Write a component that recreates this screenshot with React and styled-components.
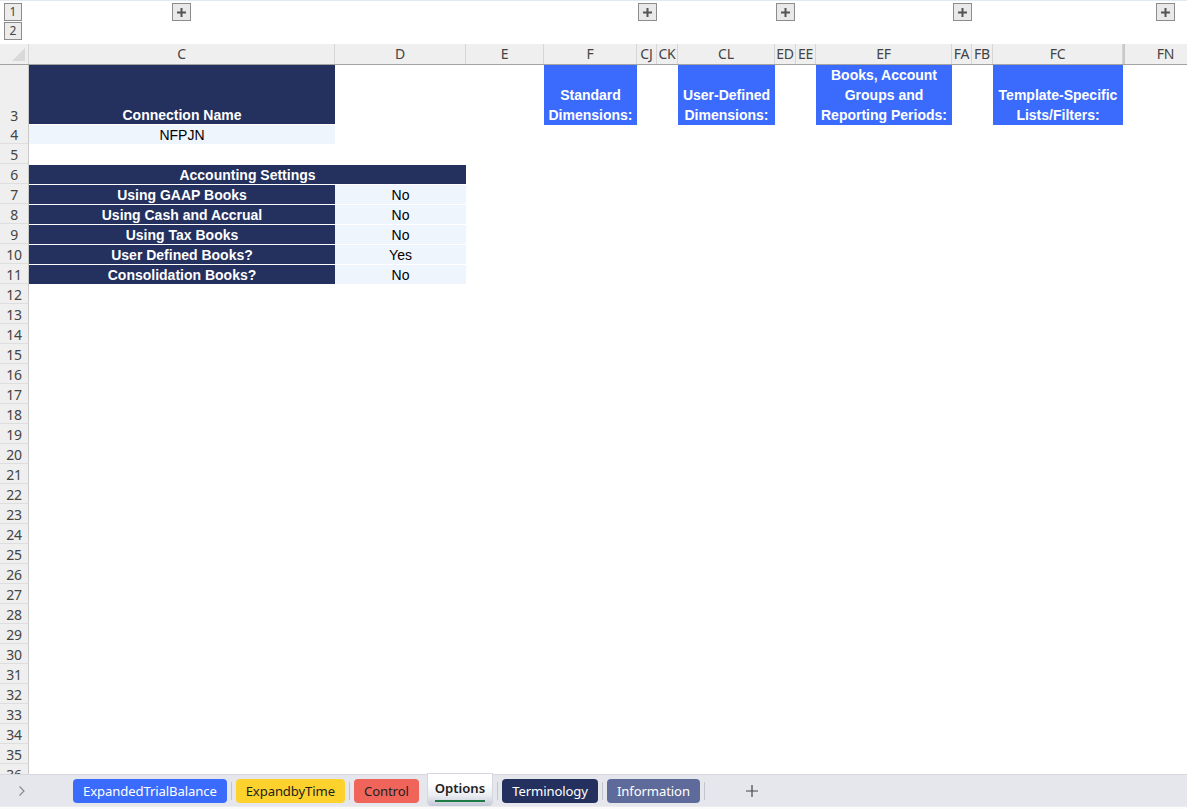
import React from 'react';
import styled, { createGlobalStyle } from 'styled-components';

const COLS =
  '29px 306px 131px 78px 93px 20px 21px 97px 21px 20px 136px 20px 21px 130px 2px 82px';

const NAVY = '#24305e';
const BLUE = '#3b6bfd';
const PALE = '#eef5fd';
const UI_FONT = '"Noto Sans", "Open Sans", sans-serif';
const CELL_FONT = '"Liberation Sans", Arial, sans-serif';

const Global = createGlobalStyle`
  html, body { margin: 0; padding: 0; background: #fff; }
  body { font-family: ${UI_FONT}; overflow: hidden; }
  * { box-sizing: border-box; }
`;

const Page = styled.div`
  width: 1187px;
  height: 809px;
  display: flex;
  flex-direction: column;
  overflow: hidden;
  background: #fff;
`;

/* ---------- outline bar ---------- */
const OutlineBar = styled.div`
  height: 44px;
  flex: none;
  border-top: 1px solid #e3e9f0;
  display: flex;
  align-items: flex-start;
  padding: 2px 0 0 4px;
`;

const LevelStack = styled.div`
  display: flex;
  flex-direction: column;
  gap: 1px;
`;

const LevelButton = styled.div`
  width: 18px;
  height: 18px;
  border: 1px solid #8c8c8c;
  background: #ececec;
  color: #444;
  font-size: 12px;
  line-height: 16px;
  text-align: center;
`;

const PlusButton = styled.div`
  width: 19px;
  height: 18px;
  margin-left: ${(p) => p.$gap}px;
  border: 1px solid #8c8c8c;
  background: #e9e9e9;
  display: flex;
  align-items: center;
  justify-content: center;
`;

const PlusGlyph = () => (
  <svg width="9" height="9" viewBox="0 0 9 9">
    <rect x="3.5" y="0" width="2" height="9" fill="#555" />
    <rect x="0" y="3.5" width="9" height="2" fill="#555" />
  </svg>
);

/* ---------- column headers ---------- */
const HeaderRow = styled.div`
  display: grid;
  grid-template-columns: ${COLS};
  height: 21px;
  flex: none;
  background: #efefef;
  border-bottom: 1px solid #a3a3a3;
`;

const Corner = styled.div`
  position: relative;
  border-right: 1px solid #d6d6d6;
  &::after {
    content: '';
    position: absolute;
    right: 3px;
    bottom: 3px;
    width: 0;
    height: 0;
    border-left: 13px solid transparent;
    border-bottom: 13px solid #d9d9d9;
  }
`;

const ColHead = styled.div`
  grid-column: ${(p) => p.$col};
  border-right: 1px solid ${(p) => (p.$hidden ? '#c8c8c8' : '#d6d6d6')};
  ${(p) => (p.$hidden ? 'border-left: 1px solid #c8c8c8;' : '')}
  color: #444;
  font-size: 14px;
  line-height: 20px;
  text-align: center;
  white-space: nowrap;
  overflow: hidden;
  letter-spacing: -0.2px;
`;

/* ---------- sheet ---------- */
const Sheet = styled.div`
  flex: 1;
  overflow: hidden;
  display: flex;
  flex-direction: column;
`;

const Row = styled.div`
  display: grid;
  grid-template-columns: ${COLS};
  height: ${(p) => p.$h}px;
  flex: none;
`;

const RowHead = styled.div`
  grid-column: 1;
  background: #efefef;
  border-right: 1px solid #c9c9c9;
  border-bottom: 1px solid #dedede;
  color: #444;
  font-size: 14px;
  line-height: 17px;
  display: flex;
  align-items: flex-end;
  justify-content: center;
  letter-spacing: -0.3px;
`;

const Cell = styled.div`
  grid-column: ${(p) => p.$col};
  background: ${(p) => p.$bg || 'transparent'};
  color: ${(p) => p.$fg || '#000'};
  font-family: ${CELL_FONT};
  font-size: 14px;
  font-weight: ${(p) => (p.$bold ? 700 : 400)};
  text-align: center;
  white-space: nowrap;
  border-top: ${(p) => (p.$top ? '1px solid #fff' : '0')};
  padding-top: ${(p) => (p.$top ? '1px' : '0')};
  display: flex;
  flex-direction: column;
  justify-content: ${(p) => (p.$top ? 'flex-start' : 'flex-end')};
  overflow: visible;
  line-height: ${(p) => (p.$top ? '18px' : '20px')};
`;

/* ---------- tab bar ---------- */
const TabBar = styled.div`
  height: 35px;
  flex: none;
  background: #fff;
  display: flex;
  flex-direction: column;
`;

const TabStrip = styled.div`
  height: 32px;
  background: #e5e7ed;
  border-top: 1px solid #d7d9df;
  display: flex;
  align-items: center;
  padding-left: 18px;
`;

const BottomEdge = styled.div`
  flex: 1;
  border-top: 1px solid #ededf0;
  background: #fbfbfb;
`;

const Chevron = styled.div`
  width: 8px;
  display: flex;
  margin-right: 47px;
`;

const Tab = styled.div`
  height: 24px;
  padding: 0 10px;
  border-radius: 4px;
  background: ${(p) => p.$bg};
  color: ${(p) => p.$fg};
  font-family: ${UI_FONT};
  font-size: 13.1px;
  line-height: 24px;
  white-space: nowrap;
  letter-spacing: -0.1px;
`;

const ActiveTab = styled.div`
  align-self: flex-start;
  margin-top: -1px;
  height: 32px;
  padding: 0 7px;
  border-radius: 0 0 4px 4px;
  background: linear-gradient(#ffffff 30%, #eceef3 65%, #c3c8d6);
  box-shadow: 0 0 0 1px #d5d8e0;
  color: #222;
  font-size: 13.1px;
  font-weight: 600;
  display: flex;
  align-items: center;
  margin-left: 9px;
  margin-right: 1px;
`;

const ActiveLabel = styled.span`
  position: relative;
  line-height: 20px;
  margin-top: -4px;
  &::after {
    content: '';
    position: absolute;
    left: 0;
    right: 0;
    bottom: -4px;
    height: 2px;
    background: #1e7b46;
  }
`;

const Sep = styled.div`
  width: 1px;
  height: 18px;
  background: #c3c5cc;
  margin: 0 4px;
`;

const AddTab = styled.div`
  margin-left: 36px;
  display: flex;
`;

const headers = [
  ['C', 2], ['D', 3], ['E', 4], ['F', 5], ['CJ', 6], ['CK', 7], ['CL', 8],
  ['ED', 9], ['EE', 10], ['EF', 11], ['FA', 12], ['FB', 13], ['FC', 14],
];

const settings = [
  [7, 'Using GAAP Books', 'No'],
  [8, 'Using Cash and Accrual', 'No'],
  [9, 'Using Tax Books', 'No'],
  [10, 'User Defined Books?', 'Yes'],
  [11, 'Consolidation Books?', 'No'],
];

const Lines = ({ lines }) =>
  lines.map((l, i) => <span key={i}>{l}</span>);

export default function App() {
  const emptyRows = [];
  for (let n = 12; n <= 36; n++) emptyRows.push(n);

  return (
    <Page>
      <Global />
      <OutlineBar>
        <LevelStack>
          <LevelButton>1</LevelButton>
          <LevelButton>2</LevelButton>
        </LevelStack>
        <PlusButton $gap={150}><PlusGlyph /></PlusButton>
        <PlusButton $gap={447}><PlusGlyph /></PlusButton>
        <PlusButton $gap={119}><PlusGlyph /></PlusButton>
        <PlusButton $gap={158}><PlusGlyph /></PlusButton>
        <PlusButton $gap={184}><PlusGlyph /></PlusButton>
      </OutlineBar>

      <HeaderRow>
        <Corner />
        {headers.map(([h, c]) => (
          <ColHead key={h} $col={c}>{h}</ColHead>
        ))}
        <ColHead $hidden $col={15} />
        <ColHead $col={16}>FN</ColHead>
      </HeaderRow>

      <Sheet>
        <Row $h={59}>
          <RowHead>3</RowHead>
          <Cell $col={2} $bg={NAVY} $fg="#fff" $bold>Connection Name</Cell>
          <Cell $col={5} $bg={BLUE} $fg="#fff" $bold>
            <Lines lines={['Standard', 'Dimensions:']} />
          </Cell>
          <Cell $col={8} $bg={BLUE} $fg="#fff" $bold>
            <Lines lines={['User-Defined', 'Dimensions:']} />
          </Cell>
          <Cell $col={11} $bg={BLUE} $fg="#fff" $bold>
            <Lines lines={['Books, Account', 'Groups and', 'Reporting Periods:']} />
          </Cell>
          <Cell $col={14} $bg={BLUE} $fg="#fff" $bold>
            <Lines lines={['Template-Specific', 'Lists/Filters:']} />
          </Cell>
        </Row>
        <Row $h={20}>
          <RowHead>4</RowHead>
          <Cell $col={2} $bg={PALE} $top>NFPJN</Cell>
        </Row>
        <Row $h={20}>
          <RowHead>5</RowHead>
        </Row>
        <Row $h={20}>
          <RowHead>6</RowHead>
          <Cell $col="2 / 4" $bg={NAVY} $fg="#fff" $bold $top>Accounting Settings</Cell>
        </Row>
        {settings.map(([n, label, val]) => (
          <Row $h={20} key={n}>
            <RowHead>{n}</RowHead>
            <Cell $col={2} $bg={NAVY} $fg="#fff" $bold $top>{label}</Cell>
            <Cell $col={3} $bg={PALE} $top>{val}</Cell>
          </Row>
        ))}
        {emptyRows.map((n) => (
          <Row $h={20} key={n}>
            <RowHead>{n}</RowHead>
          </Row>
        ))}
      </Sheet>

      <TabBar>
        <TabStrip>
          <Chevron>
            <svg width="8" height="12" viewBox="0 0 8 12">
              <polyline points="1.5,1.5 6,6 1.5,10.5" fill="none" stroke="#8a8a8a" strokeWidth="1.2" />
            </svg>
          </Chevron>
          <Tab $bg="#3b6bfd" $fg="#fff">ExpandedTrialBalance</Tab>
          <Sep />
          <Tab $bg="#fdd22c" $fg="#222">ExpandbyTime</Tab>
          <Sep />
          <Tab $bg="#f0645a" $fg="#222">Control</Tab>
          <ActiveTab><ActiveLabel>Options</ActiveLabel></ActiveTab>
          <Sep />
          <Tab $bg="#24305e" $fg="#fff">Terminology</Tab>
          <Sep />
          <Tab $bg="#5e6a9a" $fg="#fff">Information</Tab>
          <Sep />
          <AddTab>
            <svg width="14" height="14" viewBox="0 0 14 14">
              <path d="M7 1v12M1 7h12" stroke="#444" strokeWidth="1.2" />
            </svg>
          </AddTab>
        </TabStrip>
        <BottomEdge />
      </TabBar>
    </Page>
  );
}
